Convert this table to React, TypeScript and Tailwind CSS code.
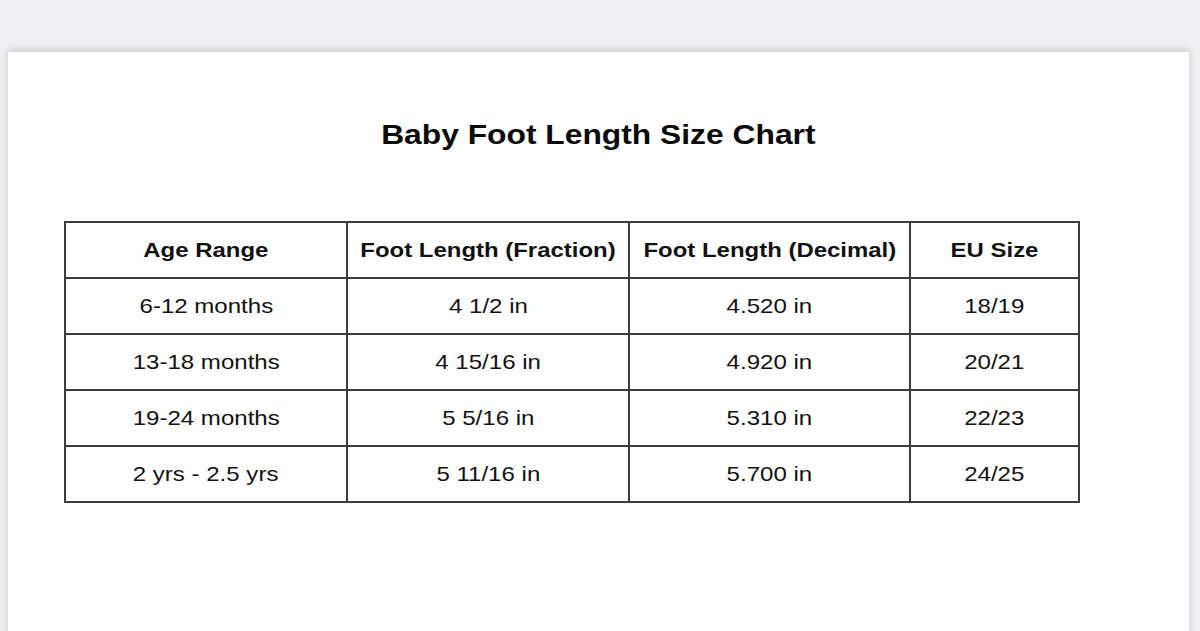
import React from "react";

const rows = [
  ["6-12 months", "4 1/2 in", "4.520 in", "18/19"],
  ["13-18 months", "4 15/16 in", "4.920 in", "20/21"],
  ["19-24 months", "5 5/16 in", "5.310 in", "22/23"],
  ["2 yrs - 2.5 yrs", "5 11/16 in", "5.700 in", "24/25"],
];

const headers = ["Age Range", "Foot Length (Fraction)", "Foot Length (Decimal)", "EU Size"];

export default function App() {
  return (
    <div
      className="w-[1200px] h-[631px] overflow-hidden bg-[#efeff4] pt-[52px] pl-[8px]"
      style={{ fontFamily: '"Liberation Sans", Arial, sans-serif' }}
    >
      <div className="w-[1181px] h-[600px] bg-white shadow-[0_-2px_8px_rgba(0,0,0,0.16)] pt-[64px]">
        <h1 className="text-center text-[28px] font-bold text-[#0a0a0a] leading-[38px]">
          <span className="inline-block scale-x-[1.135]">Baby Foot Length Size Chart</span>
        </h1>
        <table className="ml-[56px] mt-[67px] border-collapse text-[#111] table-fixed">
          <colgroup>
            <col className="w-[282px]" />
            <col className="w-[282px]" />
            <col className="w-[281px]" />
            <col className="w-[169px]" />
          </colgroup>
          <thead>
            <tr className="h-[56px]">
              {headers.map((h) => (
                <th key={h} className="border-2 border-[#3c3c3c] text-[21px] font-bold text-center p-0 whitespace-nowrap">
                  <span className="inline-block scale-x-[1.14]">{h}</span>
                </th>
              ))}
            </tr>
          </thead>
          <tbody>
            {rows.map((r) => (
              <tr key={r[0]} className="h-[56px]">
                {r.map((c, i) => (
                  <td key={i} className="border-2 border-[#3c3c3c] text-[21px] text-center p-0 whitespace-nowrap">
                    <span className="inline-block scale-x-[1.145]">{c}</span>
                  </td>
                ))}
              </tr>
            ))}
          </tbody>
        </table>
      </div>
    </div>
  );
}
